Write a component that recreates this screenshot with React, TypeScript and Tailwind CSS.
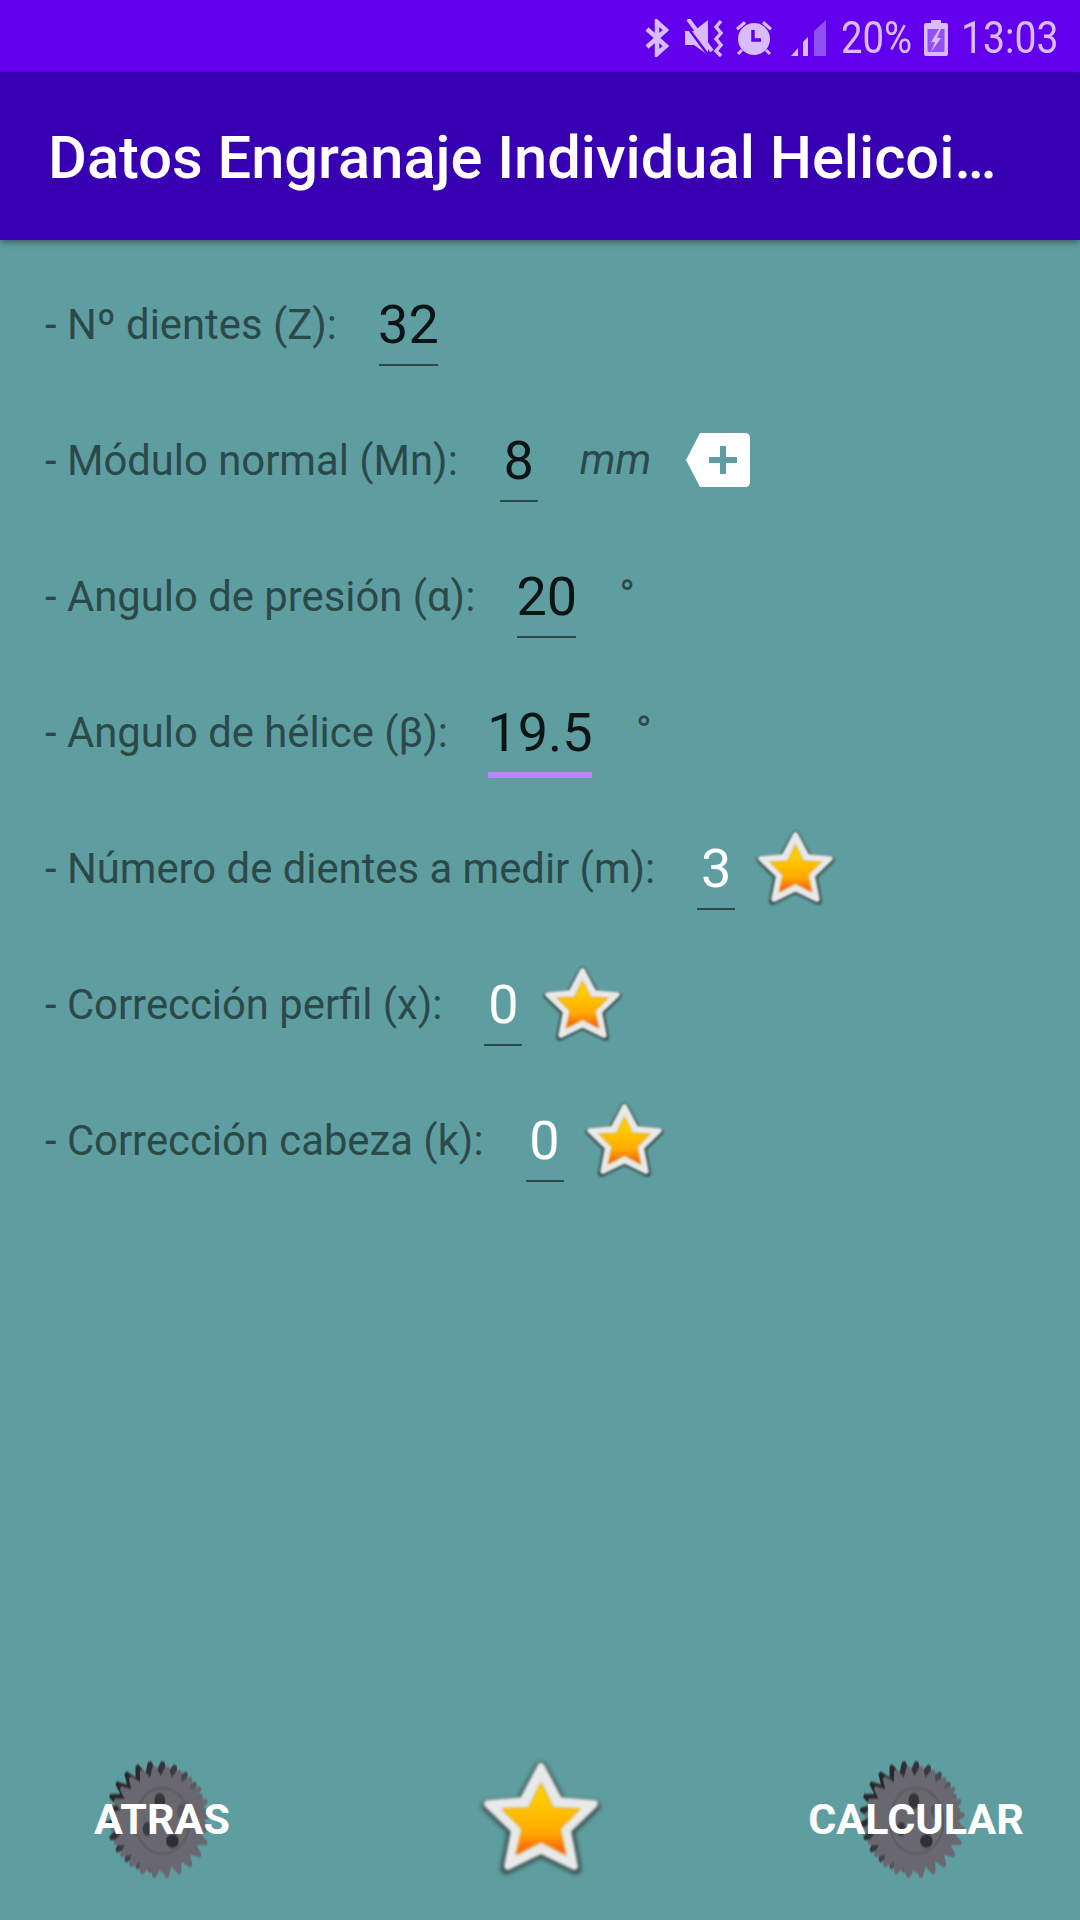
import { useId } from 'react'

const statusColor = '#d8bcff'

function BluetoothIcon() {
  return (
    <svg width="24" height="38" viewBox="0 0 24 38" fill="none" stroke={statusColor} strokeWidth="4.5">
      <path d="M2 10 L21 27 L12 35 L12 3 L21 11 L2 28" />
    </svg>
  )
}

function MuteVibrateIcon() {
  return (
    <svg width="40" height="38" viewBox="0 0 40 38" fill={statusColor}>
      <path d="M0 12 H9 L23 1 V36 L9 26 H0 Z" />
      <path d="M0 5 L24 37" stroke="#6200ee" strokeWidth="2.5" />
      <path d="M3 0 L27 32" stroke={statusColor} strokeWidth="4" />
      <path d="M36 2 L31 8 L36 14 L31 20 L36 26 L31 32 L36 37" fill="none" stroke={statusColor} strokeWidth="3.5" />
    </svg>
  )
}

function AlarmIcon() {
  return (
    <svg width="38" height="38" viewBox="0 0 38 38" fill={statusColor}>
      <circle cx="19" cy="20" r="16" />
      <path d="M1 9 L9 2 L11 4.5 L3 11.5 Z M37 9 L29 2 L27 4.5 L35 11.5 Z" />
      <path d="M7 31 L3 35 M31 31 L35 35" stroke={statusColor} strokeWidth="3" />
      <path d="M18 11 V21 H26" fill="none" stroke="#6200ee" strokeWidth="3.5" />
    </svg>
  )
}

function SignalIcon() {
  return (
    <svg width="36" height="36" viewBox="0 0 36 36">
      <path d="M0 36 L7 28 V36 Z" fill={statusColor} />
      <path d="M12 22 L17 17 V36 H12 Z" fill={statusColor} />
      <path d="M23 11 L35 0 V36 H23 Z" fill="#9150f5" />
    </svg>
  )
}

function BatteryIcon() {
  return (
    <svg width="24" height="36" viewBox="0 0 24 36">
      <path d="M7 0 H17 V3 H22 Q24 3 24 5 V34 Q24 36 22 36 H2 Q0 36 0 34 V5 Q0 3 2 3 H7 Z" fill={statusColor} />
      <rect x="3.5" y="9" width="17" height="23" fill="#9150f5" />
      <path d="M15 9 L7 22 H11 L7 32 L17 18 H13 L17 9 Z" fill={statusColor} />
    </svg>
  )
}

function StatusBar() {
  return (
    <div className="flex h-[72px] items-center justify-end bg-[#6200ee] pr-[22px] pt-[3px] text-[#d8bcff]">
      <div className="flex items-center">
        <BluetoothIcon />
        <div className="ml-[16px]"><MuteVibrateIcon /></div>
        <div className="ml-[10px]"><AlarmIcon /></div>
        <div className="ml-[18px]"><SignalIcon /></div>
        <span className="ml-[14px] w-[73px] origin-left scale-x-[0.87] whitespace-nowrap text-[44px] leading-none">20%</span>
        <div className="ml-[10px]"><BatteryIcon /></div>
        <span className="ml-[13px] w-[97px] origin-left scale-x-[0.89] whitespace-nowrap text-[44px] leading-none">13:03</span>
      </div>
    </div>
  )
}

function AppBar() {
  return (
    <div className="relative z-10 flex h-[168px] items-center bg-[#3700b3] pl-[48px] pt-[5px] shadow-[0_3px_6px_rgba(0,0,0,0.35)]">
      <h1 className="whitespace-nowrap text-[59.6px] font-medium leading-none text-white">
        Datos Engranaje Individual Helicoi…
      </h1>
    </div>
  )
}

function Star({ size }: { size: number }) {
  const id = useId()
  return (
    <svg width={size} height={size} viewBox="0 0 160 160" className="shrink-0">
      <defs>
        <linearGradient id={id + 'g'} x1="0" y1="0.25" x2="0" y2="1">
          <stop offset="0" stopColor="#ffcb00" />
          <stop offset="0.6" stopColor="#ffa800" />
          <stop offset="1" stopColor="#fb4d12" />
        </linearGradient>
        <filter id={id + 'b'} x="-20%" y="-20%" width="140%" height="140%">
          <feGaussianBlur stdDeviation="1.6" />
        </filter>
        <filter id={id + 's'} x="-20%" y="-20%" width="140%" height="140%">
          <feGaussianBlur stdDeviation="2.5" />
        </filter>
      </defs>
      <path
        d="M80 28 L100 64 L134 67 L108 92 L115 130 L80 113 L45 130 L52 92 L26 67 L60 64 Z"
        fill="#30403f"
        stroke="#30403f"
        strokeWidth="10"
        strokeLinejoin="round"
        filter={`url(#${id}s)`}
      />
      <path
        d="M80 28 L98 62 L133 65 L106 91 L113 127 L80 111 L47 127 L54 91 L27 65 L62 62 Z"
        fill="#e2e5e5"
        stroke="#e8eaea"
        strokeWidth="8"
        strokeLinejoin="round"
        filter={`url(#${id}b)`}
      />
      <path
        d="M80 44 L92 69 L119 70 L99 90 L105 116 L80 103 L55 116 L61 90 L41 70 L68 69 Z"
        fill={`url(#${id}g)`}
        stroke="#e89a10"
        strokeWidth="1"
        filter={`url(#${id}b)`}
      />
    </svg>
  )
}

function gearPath() {
  const teeth = 24
  const points: string[] = []
  for (let i = 0; i < teeth; i++) {
    const a = (i / teeth) * Math.PI * 2
    const step = (Math.PI * 2) / teeth
    const at = (r: number, t: number) =>
      `${(60 + r * Math.cos(t)).toFixed(1)} ${(60 + r * Math.sin(t)).toFixed(1)}`
    points.push(at(46, a), at(56, a + step * 0.38), at(56, a + step * 0.62), at(46, a + step))
  }
  return 'M' + points.join(' L') + ' Z'
}

function Gear() {
  const id = useId()
  const d = gearPath()
  return (
    <svg width="108" height="120" viewBox="0 0 120 120" preserveAspectRatio="none" className="mr-[8px]">
      <defs>
        <linearGradient id={id + 'd'} x1="0" y1="0" x2="1" y2="0.7">
          <stop offset="0" stopColor="#19191d" />
          <stop offset="0.5" stopColor="#3a3a40" />
          <stop offset="0.8" stopColor="#69686f" />
          <stop offset="1" stopColor="#69686f" />
        </linearGradient>
        <filter id={id + 'b'}>
          <feGaussianBlur stdDeviation="0.8" />
        </filter>
      </defs>
      <g filter={`url(#${id}b)`}>
        {/* dark copy behind, gives the cog its side wall */}
        <path d={d} fill={`url(#${id}d)`} transform="translate(-2 -2)" />
        <path d={d} fill="#69686f" transform="translate(3 3)" />
        <ellipse cx="65" cy="62" rx="30" ry="33" fill="none" stroke="#5a5960" strokeWidth="2" />
        <ellipse cx="62" cy="42" rx="6" ry="8" fill="#36353b" />
        <ellipse cx="86" cy="52" rx="5" ry="7" fill="#55545b" />
        <ellipse cx="48" cy="70" rx="5" ry="7" fill="#3a3940" />
        <ellipse cx="76" cy="82" rx="7" ry="7" fill="#2f2e34" />
      </g>
    </svg>
  )
}

function TagPlusIcon() {
  return (
    <svg width="64" height="54" viewBox="0 0 64 54" className="shrink-0">
      <path
        d="M14 0 H59 Q64 0 64 5 V49 Q64 54 59 54 H14 L0 27 Z"
        fill="#ffffff"
      />
      <path d="M34 13 H40 V24 H51 V30 H40 V41 H34 V30 H23 V24 H34 Z" fill="#5f9ea0" />
    </svg>
  )
}

function Value({
  value,
  width,
  light,
  focused,
}: {
  value: string
  width: string
  light?: boolean
  focused?: boolean
}) {
  return (
    <div
      className={`flex items-center justify-center pt-[3px] text-[54px] leading-none ${width} ${
        focused
          ? 'mb-[-4px] ml-[-2px] h-[88px] border-b-[6px] border-[#bb86fc]'
          : 'h-[84px] border-b-2 border-[#2c494a]'
      } ${light ? 'text-white' : 'text-[#0c1515]'}`}
    >
      {value}
    </div>
  )
}

function Row({ label, children }: { label: string; children: React.ReactNode }) {
  return (
    <div className="flex h-[136px] items-center">
      <span className="mr-[42px] whitespace-nowrap pt-[2px] text-[41.8px] leading-none text-[#2c494a]">{label}</span>
      {children}
    </div>
  )
}

function BottomButton({ label }: { label: string }) {
  return (
    <div className="relative flex h-[120px] w-[216px] items-center justify-center">
      <Gear />
      <span className="absolute inset-0 flex items-center justify-center text-[43px] font-bold leading-none text-white">
        {label}
      </span>
    </div>
  )
}

export default function App() {
  return (
    <div
      className="flex h-[1920px] w-[1080px] flex-col overflow-hidden bg-[#5f9ea0]"
      style={{ fontFamily: 'Roboto, sans-serif' }}
    >
      <StatusBar />
      <AppBar />
      <main className="flex-1 pl-[45px] pt-[16px]">
        <Row label="- Nº dientes (Z):">
          <Value value="32" width="w-[59px]" />
        </Row>
        <Row label="- Módulo normal (Mn):">
          <Value value="8" width="w-[38px]" />
          <span className="ml-[42px] text-[42px] italic leading-none text-[#2c494a]">mm</span>
          <div className="ml-[35px]"><TagPlusIcon /></div>
        </Row>
        <Row label="- Angulo de presión (α):">
          <Value value="20" width="w-[59px]" />
          <span className="ml-[43px] text-[42px] leading-none text-[#2c494a]">°</span>
        </Row>
        <Row label="- Angulo de hélice (β):">
          <Value value="19.5" width="w-[104px]" focused />
          <span className="ml-[44px] text-[42px] leading-none text-[#2c494a]">°</span>
        </Row>
        <Row label="- Número de dientes a medir (m):">
          <Value value="3" width="w-[38px]" light />
          <div className="ml-[8px]"><Star size={105} /></div>
        </Row>
        <Row label="- Corrección perfil (x):">
          <Value value="0" width="w-[38px]" light />
          <div className="ml-[8px]"><Star size={105} /></div>
        </Row>
        <Row label="- Corrección cabeza (k):">
          <Value value="0" width="w-[38px]" light />
          <div className="ml-[8px]"><Star size={105} /></div>
        </Row>
      </main>
      <footer className="flex items-center justify-between pb-[21px] pl-[54px] pr-[56px]">
        <BottomButton label="ATRAS" />
        <div className="ml-[4px]"><Star size={160} /></div>
        <BottomButton label="CALCULAR" />
      </footer>
    </div>
  )
}
